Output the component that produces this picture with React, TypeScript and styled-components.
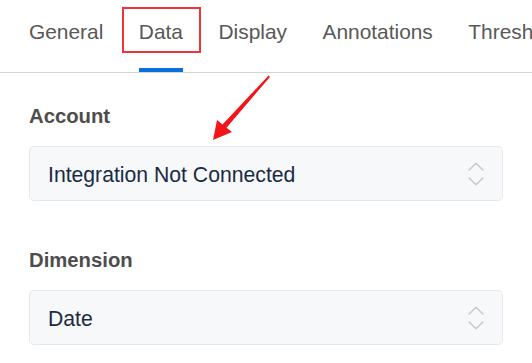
import React from "react";
import styled, { createGlobalStyle } from "styled-components";

const Global = createGlobalStyle`
  html, body { margin: 0; padding: 0; background: #ffffff; overflow: hidden; }
  body { font-family: "Liberation Sans", Arial, Helvetica, sans-serif; }
  * { box-sizing: border-box; }
`;

const Page = styled.div`
  position: relative;
  width: 532px;
  height: 363px;
  background: #ffffff;
`;

const TabBar = styled.nav`
  display: flex;
  gap: 35.5px;
  padding-left: 29px;
  height: 73px;
  border-bottom: 1px solid #d3d3d3;
  overflow: hidden;
  white-space: nowrap;
`;

const Tab = styled.div<{ $active?: boolean }>`
  position: relative;
  flex: none;
  height: 72px;
  padding-top: 20px;
  font-size: 20.9px;
  line-height: 24px;
  color: #585858;
  border-bottom: 4px solid ${(p) => (p.$active ? "#0a6fdd" : "transparent")};
`;

const HighlightBox = styled.span`
  position: absolute;
  left: -17px;
  right: -18px;
  top: 7px;
  height: 46px;
  border: 2px solid #ee3439;
  pointer-events: none;
`;

const Content = styled.div`
  display: flex;
  flex-direction: column;
  padding: 31px 29px 0;
  gap: 47px;
`;

const Field = styled.div`
  display: flex;
  flex-direction: column;
  gap: 18px;
`;

const Label = styled.div`
  font-size: 20.3px;
  line-height: 24px;
  font-weight: 700;
  color: #4d4d4d;
`;

const Select = styled.div`
  display: flex;
  align-items: center;
  justify-content: space-between;
  height: 55px;
  padding: 2px 18px 0 18px;
  background: #f7f8fa;
  border: 1px solid #e6e8ec;
  border-radius: 5px;
`;

const Value = styled.span`
  font-size: 21.2px;
  line-height: 24px;
  color: #1a2b44;
`;

const Chevrons = styled.svg`
  flex: none;
  width: 16px;
  height: 24px;
  margin-top: -2px;
`;

const ArrowMark = styled.svg`
  position: absolute;
  left: 205px;
  top: 70px;
  width: 70px;
  height: 75px;
  pointer-events: none;
`;

const UpDown = () => (
  <Chevrons viewBox="0 0 16 24" fill="none">
    <polyline points="1,8 8,1.2 15,8" stroke="#c6c8cc" strokeWidth="1.5" strokeLinecap="round" strokeLinejoin="round" />
    <polyline points="1,16 8,22.8 15,16" stroke="#c6c8cc" strokeWidth="1.5" strokeLinecap="round" strokeLinejoin="round" />
  </Chevrons>
);

const tabs = ["General", "Data", "Display", "Annotations", "Thresholds"];

export default function App() {
  return (
    <Page>
      <Global />
      <TabBar>
        {tabs.map((t) => (
          <Tab key={t} $active={t === "Data"}>
            {t}
            {t === "Data" && <HighlightBox />}
          </Tab>
        ))}
      </TabBar>
      <Content>
        <Field>
          <Label>Account</Label>
          <Select>
            <Value>Integration Not Connected</Value>
            <UpDown />
          </Select>
        </Field>
        <Field>
          <Label>Dimension</Label>
          <Select>
            <Value>Date</Value>
            <UpDown />
          </Select>
        </Field>
      </Content>
      <ArrowMark viewBox="0 0 70 75">
        <polygon
          points="8,70 12,50 17.5,54.5 63.6,5.4 65,6.9 21.5,57.8 27,62"
          fill="#f2161a"
        />
      </ArrowMark>
    </Page>
  );
}
